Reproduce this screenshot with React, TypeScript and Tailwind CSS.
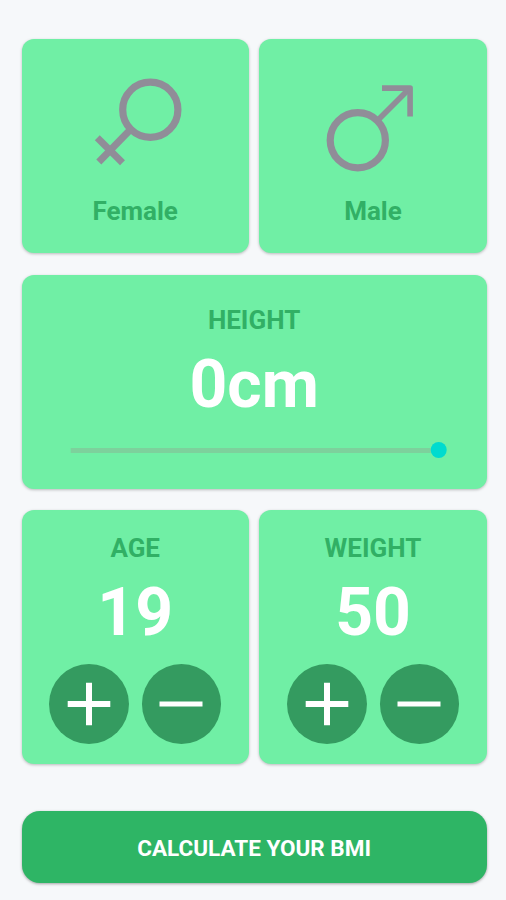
import { useState } from 'react';
import type { ReactNode } from 'react';

interface CounterCardProps {
  label: string;
  value: number;
  onChange: (value: number) => void;
}

function Card({ className, children }: { className: string; children: ReactNode }) {
  return (
    <div
      className={`flex flex-col items-center rounded-[12px] bg-[#70efa5] shadow-[0_1px_3px_rgba(0,0,0,0.25)] ${className}`}
    >
      {children}
    </div>
  );
}

function Label({ children }: { children: ReactNode }) {
  return <span className="text-[26px] leading-[30px] font-bold text-[#31b065]">{children}</span>;
}

function FemaleIcon() {
  return (
    <svg viewBox="0 0 96 96" className="h-24 w-24" fill="none" stroke="#908d98" strokeWidth="7">
      <circle cx="63.3" cy="33.8" r="27.6" strokeWidth="7.2" />
      <path d="M43.5 53.5L11.8 86" />
      <path d="M10.3 61.8L35.5 86.7" />
    </svg>
  );
}

function MaleIcon() {
  return (
    <svg viewBox="0 0 96 96" className="h-24 w-24" fill="none" stroke="#908d98" strokeWidth="5.6">
      <circle cx="32.8" cy="64.2" r="27.6" strokeWidth="7.2" />
      <path d="M53.5 43.5L84.5 12.5" />
      <path d="M57 12.1H85.1V40.5" strokeLinejoin="round" />
    </svg>
  );
}

function RoundButton({ label, onClick, children }: { label: string; onClick: () => void; children: ReactNode }) {
  return (
    <button
      aria-label={label}
      onClick={onClick}
      className="flex h-[79.5px] w-[79.5px] cursor-pointer items-center justify-center rounded-full bg-[#349b60]"
    >
      <svg viewBox="0 0 44 44" className="h-11 w-11" stroke="#fff" fill="none">
        {children}
      </svg>
    </button>
  );
}

function CounterCard({ label, value, onChange }: CounterCardProps) {
  return (
    <Card className="h-[254px] pt-[23.4px]">
      <Label>{label}</Label>
      <span className="mt-[12.2px] text-[66px] leading-[76px] font-bold text-white">{value}</span>
      <div className="mt-[12.9px] flex gap-[13px]">
        <RoundButton label="plus" onClick={() => onChange(value + 1)}>
          <path d="M.7 22H43.3M22 .7V43.3" strokeWidth="6" />
        </RoundButton>
        <RoundButton label="minus" onClick={() => onChange(value - 1)}>
          <path d="M.5 22H43.5" strokeWidth="5" />
        </RoundButton>
      </div>
    </Card>
  );
}

export default function App() {
  const [age, setAge] = useState(19);
  const [weight, setWeight] = useState(50);

  return (
    <div className="flex h-[900px] w-[506px] flex-col bg-[#f6f8fa] pt-[39.4px] pr-[19.4px] pl-[21.6px] font-['Roboto',sans-serif]">
      <div className="grid grid-cols-2 gap-[10.6px]">
        <Card className="h-[214px] pt-[36.6px]">
          <FemaleIcon />
          <span className="mt-[24.2px] flex">
            <Label>Female</Label>
          </span>
        </Card>
        <Card className="h-[214px] pt-[36.6px]">
          <MaleIcon />
          <span className="mt-[24.2px] flex">
            <Label>Male</Label>
          </span>
        </Card>
      </div>

      <Card className="mt-[21.2px] h-[214px] pt-[30.4px]">
        <Label>HEIGHT</Label>
        <span className="mt-[12px] text-[66px] leading-[76px] font-bold text-white">0cm</span>
        <div className="mt-[19.3px] flex h-4 w-[376px] translate-x-[4.7px] items-center">
          <div className="h-[5px] flex-1 bg-[#7dd19c]" />
          <div className="h-4 w-4 rounded-full bg-[#00dbcf]" />
        </div>
      </Card>

      <div className="mt-[21px] grid grid-cols-2 gap-[10.6px]">
        <CounterCard label="AGE" value={age} onChange={setAge} />
        <CounterCard label="WEIGHT" value={weight} onChange={setWeight} />
      </div>

      <button className="mt-[47.4px] h-[72.5px] cursor-pointer rounded-[18px] bg-[#2eb565] pt-[3px] text-[22.5px] font-bold text-white shadow-[0_1px_3px_rgba(0,0,0,0.35)]">
        CALCULATE YOUR BMI
      </button>
    </div>
  );
}
